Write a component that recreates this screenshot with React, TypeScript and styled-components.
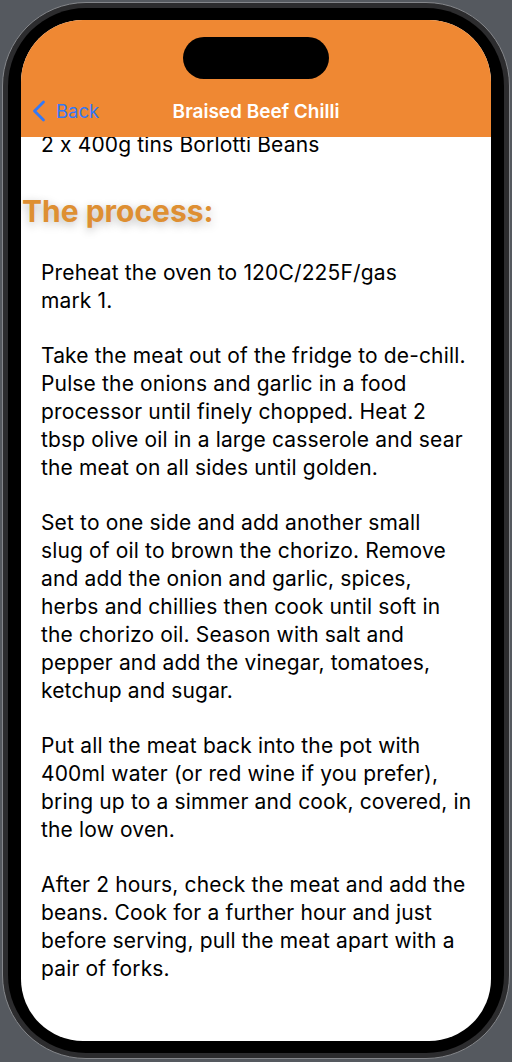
import React from "react";
import styled, { createGlobalStyle } from "styled-components";

const Global = createGlobalStyle`
  html, body { margin: 0; padding: 0; background: #55595f; }
  body {
    font-family: Inter, "Noto Sans", sans-serif;
    font-feature-settings: "calt" 0;
    -webkit-font-smoothing: antialiased;
  }
  * { box-sizing: border-box; }
`;

const Page = styled.div`
  width: 512px;
  height: 1062px;
  padding: 2px 2px 0 2px;
  background: #55595f;
`;

const Phone = styled.div`
  width: 508px;
  height: 1057px;
  border-radius: 84px;
  background: #2c2c2e;
  border: 1px solid #85878b;
  padding: 5px;
`;

const Bezel = styled.div`
  height: 100%;
  border-radius: 78px;
  background: #000;
  padding: 12px 13px;
`;

const Screen = styled.div`
  height: 100%;
  border-radius: 62px;
  background: #fff;
  overflow: hidden;
  display: flex;
  flex-direction: column;
`;

const NavBar = styled.header`
  position: relative;
  flex: 0 0 117px;
  background: #ef8833;
  display: flex;
  flex-direction: column;
  justify-content: flex-end;
  padding-bottom: 4px;
`;

const Island = styled.div`
  position: absolute;
  top: 17px;
  left: 50%;
  transform: translateX(-50%);
  width: 146px;
  height: 42px;
  border-radius: 21px;
  background: #000;
`;

const NavRow = styled.div`
  height: 44px;
  display: grid;
  grid-template-columns: 1fr auto 1fr;
  align-items: center;
`;

const BackButton = styled.div`
  display: flex;
  align-items: center;
  gap: 10px;
  padding-left: 11px;
  color: #3478f6;
  font-size: 18.5px;
  font-weight: 400;
`;

const Title = styled.div`
  color: #fff;
  font-size: 19px;
  font-weight: 600;
  letter-spacing: 0;
`;

const Content = styled.div`
  flex: 1;
  overflow: hidden;
`;

const Line = styled.p`
  margin: -6px 0 0;
  padding: 0 20px;
  font-size: 21px;
  letter-spacing: 0.15px;
  line-height: 28px;
  color: #000;
  white-space: nowrap;
`;

const Heading = styled.h2`
  margin: 35px 0 0;
  padding: 0 1px;
  font-size: 30px;
  line-height: 34px;
  font-weight: 700;
  color: #de8f32;
  text-shadow: 0 3px 10px rgba(0, 0, 0, 0.28);
`;

const Steps = styled.div`
  display: flex;
  flex-direction: column;
  gap: 27px;
  padding: 31px 20px 0;
`;

const Step = styled.p`
  margin: 0;
  font-size: 21px;
  letter-spacing: 0.15px;
  line-height: 28px;
  color: #000;
  white-space: nowrap;
`;

const steps: string[][] = [
  ["Preheat the oven to 120C/225F/gas", "mark 1."],
  [
    "Take the meat out of the fridge to de-chill.",
    "Pulse the onions and garlic in a food",
    "processor until finely chopped. Heat 2",
    "tbsp olive oil in a large casserole and sear",
    "the meat on all sides until golden.",
  ],
  [
    "Set to one side and add another small",
    "slug of oil to brown the chorizo. Remove",
    "and add the onion and garlic, spices,",
    "herbs and chillies then cook until soft in",
    "the chorizo oil. Season with salt and",
    "pepper and add the vinegar, tomatoes,",
    "ketchup and sugar.",
  ],
  [
    "Put all the meat back into the pot with",
    "400ml water (or red wine if you prefer),",
    "bring up to a simmer and cook, covered, in",
    "the low oven.",
  ],
  [
    "After 2 hours, check the meat and add the",
    "beans. Cook for a further hour and just",
    "before serving, pull the meat apart with a",
    "pair of forks.",
  ],
];

const Chevron = () => (
  <svg width="14" height="22" viewBox="0 0 14 22" fill="none">
    <path d="M11.5 2 L2.5 11 L11.5 20" stroke="#3478f6" strokeWidth="2.8" strokeLinecap="round" strokeLinejoin="round" />
  </svg>
);

export default function App() {
  return (
    <Page>
      <Global />
      <Phone>
        <Bezel>
          <Screen>
            <NavBar>
              <Island />
              <NavRow>
                <BackButton>
                  <Chevron />
                  <span>Back</span>
                </BackButton>
                <Title>Braised Beef Chilli</Title>
                <div />
              </NavRow>
            </NavBar>
            <Content>
              <Line>2 x 400g tins Borlotti Beans</Line>
              <Heading>The process:</Heading>
              <Steps>
                {steps.map((lines, i) => (
                  <Step key={i}>
                    {lines.map((l, j) => (
                      <React.Fragment key={j}>
                        {j > 0 && <br />}
                        {l}
                      </React.Fragment>
                    ))}
                  </Step>
                ))}
              </Steps>
            </Content>
          </Screen>
        </Bezel>
      </Phone>
    </Page>
  );
}
